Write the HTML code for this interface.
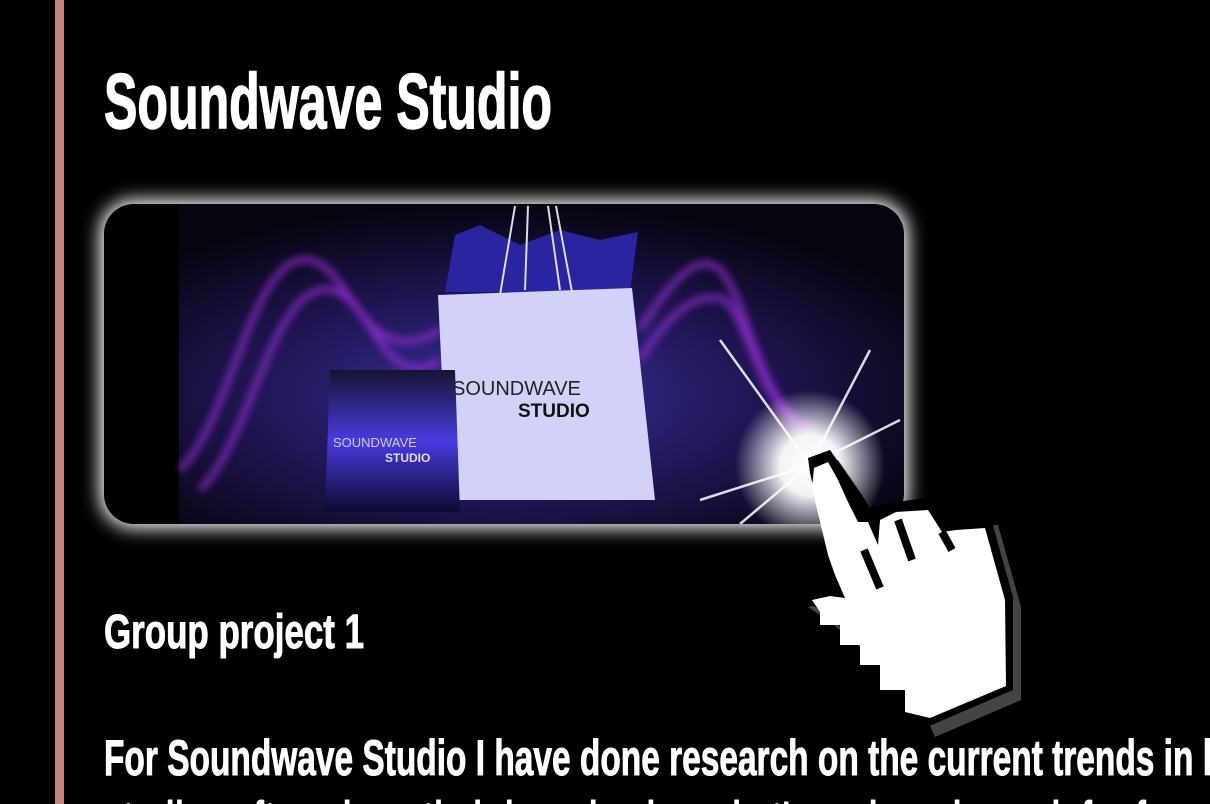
<!DOCTYPE html>
<html><head><meta charset="utf-8"><style>
html,body{margin:0;padding:0;background:#000;width:1210px;height:804px;overflow:hidden}
svg{display:block}
</style></head><body>
<svg width="1210" height="804" viewBox="0 0 1210 804" xmlns="http://www.w3.org/2000/svg">
<defs>
<clipPath id="c"><rect x="104" y="204" width="800" height="320" rx="30"/></clipPath>
<radialGradient id="bg" cx="0.5" cy="0.6" r="0.6"><stop offset="0" stop-color="#3a30a0"/><stop offset="0.55" stop-color="#1e1550"/><stop offset="1" stop-color="#07040f"/></radialGradient>
<radialGradient id="star" cx="0.5" cy="0.5" r="0.5"><stop offset="0" stop-color="#fff"/><stop offset="0.4" stop-color="#fff" stop-opacity="0.95"/><stop offset="1" stop-color="#fff" stop-opacity="0"/></radialGradient>
<linearGradient id="sack" x1="0" y1="0" x2="0" y2="1"><stop offset="0" stop-color="#151530"/><stop offset="0.5" stop-color="#4a3ae0"/><stop offset="1" stop-color="#0c0a30"/></linearGradient>
<filter id="glow" x="-10%" y="-20%" width="120%" height="140%"><feGaussianBlur stdDeviation="9"/></filter>
<filter id="b2"><feGaussianBlur stdDeviation="4"/></filter>
</defs>
<rect x="55" y="0" width="9" height="804" fill="#c98080"/>
<text x="104" y="128" font-family="Liberation Sans Narrow, Liberation Sans, sans-serif" font-weight="bold" font-size="78" fill="#fff" stroke="#fff" stroke-width="1.5" textLength="448" lengthAdjust="spacingAndGlyphs">Soundwave Studio</text>
<rect x="100" y="200" width="808" height="328" rx="34" fill="#fff" filter="url(#glow)"/>
<rect x="104" y="204" width="800" height="320" rx="30" fill="#fff"/>
<g clip-path="url(#c)">
<rect x="104" y="204" width="800" height="320" fill="url(#bg)"/>
<rect x="104" y="204" width="75" height="320" fill="#000"/>
<g fill="none" stroke="#a030e0" stroke-width="6" opacity="0.75" filter="url(#b2)">
<path d="M180 470 C230 420 250 270 300 260 C350 250 360 380 440 330"/>
<path d="M200 490 C250 440 270 300 320 290 C370 280 380 400 440 360"/>
<path d="M640 330 C670 280 700 250 720 270 C750 300 760 420 820 430"/>
<path d="M640 360 C670 310 700 290 725 300 C755 330 765 440 840 450"/>
</g>
<path d="M455 235 L480 225 L520 245 L560 230 L600 240 L638 232 L630 292 L445 292 Z" fill="#2a24a0"/>
<path d="M438 295 L632 288 L655 500 L448 500 Z" fill="#d2d1f8"/>
<path d="M500 295 L515 206 M525 290 L528 206 M548 206 L560 290 M556 206 L572 292" stroke="#ddd" stroke-width="2" fill="none"/>
<text x="452" y="395" font-family="Liberation Sans, sans-serif" font-size="20" fill="#222">SOUNDWAVE</text>
<text x="518" y="417" font-family="Liberation Sans, sans-serif" font-weight="bold" font-size="19" fill="#111">STUDIO</text>
<path d="M330 370 L455 370 L460 512 L325 512 Z" fill="url(#sack)"/>
<text x="333" y="447" font-family="Liberation Sans, sans-serif" font-size="13" fill="#ccd">SOUNDWAVE</text>
<text x="385" y="462" font-family="Liberation Sans, sans-serif" font-weight="bold" font-size="12" fill="#dde">STUDIO</text>
<circle cx="810" cy="465" r="75" fill="url(#star)"/>
<g stroke="#fff" stroke-width="2.5" opacity="0.85">
<path d="M810 465 L720 340 M810 465 L870 350 M810 465 L700 500 M810 465 L900 420 M810 465 L740 524"/>
</g>
</g>
<g>
<polygon points="814,468 838,460 878,517 905,512 941,507 961,527 998,525 1021,607 1021,700 935,737 915,693 828,620 808,607 845,597 818,483" fill="#444"/>
<polygon points="808,458 830,450 870,507 897,502 933,497 953,517 990,515 1013,597 1013,690 927,727 907,683 820,610 800,597 837,587 810,473" fill="#000"/>
<polygon points="814,468 828,462 838,480 848,502 858,522 868,522 878,545 880,520 896,512 928,510 942,532 956,530 985,528 1005,600 1006,686 930,718 905,712 905,690 880,690 880,665 860,665 860,645 840,645 840,625 820,625 820,612 812,600 830,596 845,598 835,575 828,555 822,530 816,505 812,488" fill="#fff"/>
<path d="M864 550 L880 588 M898 520 L912 560 M942 532 L952 550" stroke="#000" stroke-width="8"/>
</g>
<text x="104" y="648" font-family="Liberation Sans Narrow, Liberation Sans, sans-serif" font-weight="bold" font-size="48" fill="#fff" stroke="#fff" stroke-width="1" textLength="260" lengthAdjust="spacingAndGlyphs">Group project 1</text>
<text x="104" y="775" font-family="Liberation Sans Narrow, Liberation Sans, sans-serif" font-weight="bold" font-size="50" fill="#fff" stroke="#fff" stroke-width="1" textLength="1108" lengthAdjust="spacingAndGlyphs">For Soundwave Studio I have done research on the current trends in l</text>
<text x="104" y="836" font-family="Liberation Sans Narrow, Liberation Sans, sans-serif" font-weight="bold" font-size="50" fill="#fff" textLength="1100" lengthAdjust="spacingAndGlyphs">studios often share their brand using what's on brand merch for fans</text>
</svg>
</body></html>
